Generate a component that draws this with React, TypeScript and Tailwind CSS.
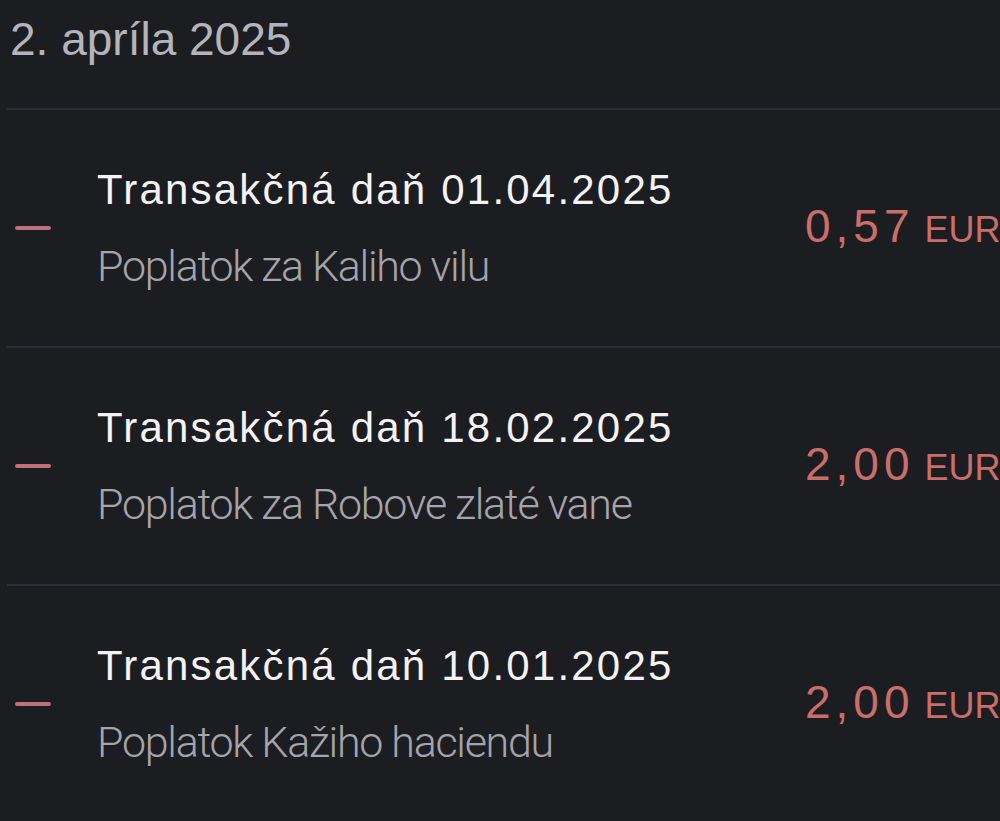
import React from 'react';

type Tx = {
  title: string;
  note: string;
  amount: string;
};

const items: Tx[] = [
  { title: 'Transakčná daň 01.04.2025', note: 'Poplatok za Kaliho vilu', amount: '0,57' },
  { title: 'Transakčná daň 18.02.2025', note: 'Poplatok za Robove zlaté vane', amount: '2,00' },
  { title: 'Transakčná daň 10.01.2025', note: 'Poplatok Kažiho haciendu', amount: '2,00' },
];

const TxRow: React.FC<{ tx: Tx }> = ({ tx }) => (
  <div className="ml-[7px] h-[238px] flex items-center border-t-2 border-[#2d2e34]">
    <div className="w-[90px] shrink-0 pl-[8px]">
      <div className="w-[36px] h-[4px] rounded-full bg-[#c0707a]" />
    </div>
    <div className="w-[708px] shrink-0 flex flex-col">
      <div className="text-[42px] leading-[42px] tracking-[2.2px] text-[#f3f3f5] font-['Liberation_Sans',Arial,sans-serif] whitespace-nowrap">
        {tx.title}
      </div>
      <div className="mt-[34px] text-[43px] leading-[43px] font-light tracking-[-0.03em] text-[#a4a4ab] font-['Roboto',sans-serif] whitespace-nowrap">
        {tx.note}
      </div>
    </div>
    <div className="shrink-0 mb-[5px] flex items-baseline whitespace-nowrap text-[#c96e6b] font-['Liberation_Sans',Arial,sans-serif]">
      <span className="text-[46px] leading-[46px] tracking-[5px]">{tx.amount}</span>
      <span className="ml-[10px] text-[36px] leading-[36px]">EUR</span>
    </div>
  </div>
);

export default function App() {
  return (
    <div className="w-[1000px] h-[821px] overflow-hidden bg-[#1c1d21]">
      <div className="pl-[10px] pt-[16px] h-[108px] text-[46px] leading-[46px] text-[#b4b4bc] font-['Liberation_Sans',Arial,sans-serif]">
        2. apríla 2025
      </div>
      {items.map((tx) => (
        <TxRow key={tx.title} tx={tx} />
      ))}
    </div>
  );
}
